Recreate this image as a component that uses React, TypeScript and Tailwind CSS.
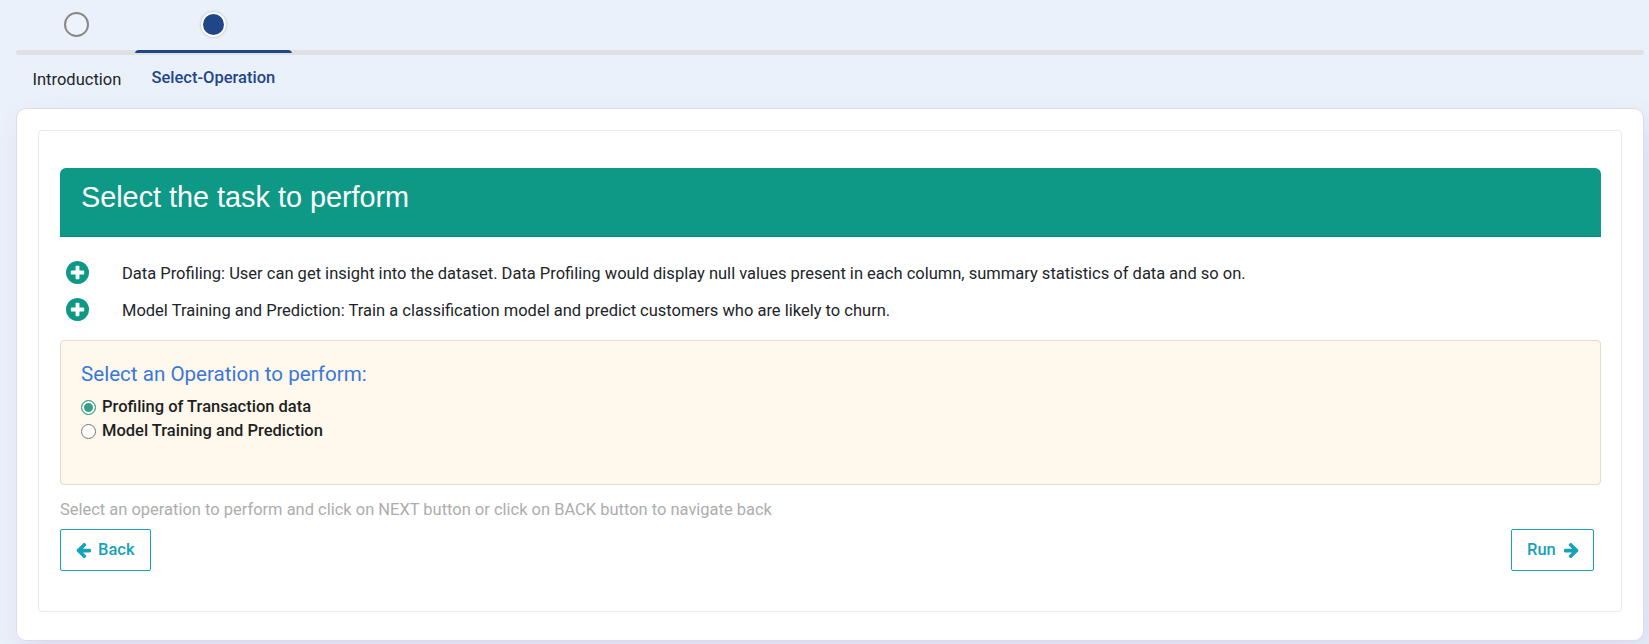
import { useState } from "react";

const tasks = [
  "Data Profiling: User can get insight into the dataset. Data Profiling would display null values present in each column, summary statistics of data and so on.",
  "Model Training and Prediction: Train a classification model and predict customers who are likely to churn.",
];

const operations = ["Profiling of Transaction data", "Model Training and Prediction"];

function PlusCircle({ className }: { className: string }) {
  return (
    <svg viewBox="128 128 1536 1536" fill="currentColor" className={className} aria-hidden="true">
      <path d="M1344 960v-128q0-26-19-45t-45-19h-256v-256q0-26-19-45t-45-19h-128q-26 0-45 19t-19 45v256h-256q-26 0-45 19t-19 45v128q0 26 19 45t45 19h256v256q0 26 19 45t45 19h128q26 0 45-19t19-45v-256h256q26 0 45-19t19-45zm320-64q0 209-103 385.5t-279.5 279.5-385.5 103-385.5-103-279.5-279.5-103-385.5 103-385.5 279.5-279.5 385.5-103 385.5 103 279.5 279.5 103 385.5z" />
    </svg>
  );
}

function Arrow({ className }: { className: string }) {
  return (
    <svg viewBox="128 192 1536 1536" fill="currentColor" className={className} aria-hidden="true">
      <path d="M1664 896v128q0 53-32.5 90.5t-84.5 37.5h-704l293 294q38 36 38 90t-38 90l-75 76q-37 37-90 37-52 0-91-37l-651-652q-37-37-37-90 0-52 37-91l651-650q38-38 91-38 52 0 90 38l75 74q38 38 38 91t-38 91l-293 293h704q52 0 84.5 37.5t32.5 90.5z" />
    </svg>
  );
}

function Stepper() {
  return (
    <nav className="h-[108px] pl-4 pr-[5px]">
      <div className="flex h-[50px] pt-3">
        <div className="flex w-[119px] justify-center">
          <span className="mr-[-2px] size-[25px] rounded-full border-2 border-[#888] bg-[#edf3fb]" />
        </div>
        <div className="flex w-[157px] justify-center">
          <span className="size-[25px] rounded-full border-2 border-white bg-[#1f4788] shadow-[0_0_2px_1px_rgba(0,0,0,0.12)]" />
        </div>
      </div>
      <div className="h-[5px] rounded-full bg-[#dee0e4] pl-[119px]">
        <div className="h-[4px] w-[157px] overflow-hidden rounded-t-[4px]">
          <div className="h-[3px] bg-[#1f4788]" />
        </div>
      </div>
      <div className="flex text-[16.5px] leading-6">
        <span className="w-[119px] pl-[16.5px] pt-[13px] text-[#212529]">Introduction</span>
        <span className="pl-[16.5px] pt-[11px] font-medium text-[#1f4788]">Select-Operation</span>
      </div>
    </nav>
  );
}

export default function App() {
  const [selected, setSelected] = useState(0);
  return (
    <div className="h-[644px] overflow-hidden bg-[#eaf1fa] font-['Roboto',sans-serif] text-[#212529]">
      <Stepper />
      <main className="ml-4 mr-[5px] h-[533px] rounded-[10px] border border-[#e1d8f0] bg-white px-[21px] pt-[21px] shadow-[8px_14px_30px_rgba(90,90,160,0.13)]">
        <section className="h-[482px] rounded-[4px] border border-[#e9eaec] pl-[21px] pr-5 pt-[37px]">
          <header className="h-[69px] rounded-t-[6px] border-b border-[#0c8a79] bg-[#0d9985] px-[21px] pt-3">
            <h1 className="font-['Liberation_Sans',sans-serif] text-[28.8px] leading-[34px] text-white">
              Select the task to perform
            </h1>
          </header>
          <ul className="pt-[17px]">
            {tasks.map((task) => (
              <li key={task} className="flex h-[37px] items-center pl-[6px]">
                <PlusCircle className="size-[23px] text-[#0d9985]" />
                <span className="ml-[33px] pt-[3px] text-[16.5px] leading-6">{task}</span>
              </li>
            ))}
          </ul>
          <div className="mt-[12px] h-[145px] rounded-[4px] border border-[#e4dccb] bg-[#fff8ed] px-5 pt-[21px]">
            <h2 className="text-[20.6px] leading-6 text-[#3a78d8]">Select an Operation to perform:</h2>
            <div className="mt-[9px]">
              {operations.map((operation, index) => (
                <label key={operation} className="flex h-6 items-center text-[16.5px] font-medium leading-6 text-[#1d1f21]">
                  <input
                    type="radio"
                    name="operation"
                    checked={selected === index}
                    onChange={() => setSelected(index)}
                    className="mr-[6px] mt-[1px] size-[15px] appearance-none rounded-full border border-[#767676] bg-white checked:border-[#3b9f85] checked:bg-[#3b9f85] checked:shadow-[inset_0_0_0_2px_white]"
                  />
                  {operation}
                </label>
              ))}
            </div>
          </div>
          <p className="mt-[13px] text-[16.48px] leading-6 text-[#adadad]">
            Select an operation to perform and click on NEXT button or click on BACK button to navigate back
          </p>
          <div className="mt-[7px] flex justify-between pr-[7px] text-[16.5px] font-medium text-[#17a2b8]">
            <button className="flex h-[42px] w-[91px] items-center rounded-[2px] border border-[#17a2b8] pl-[15px]">
              <Arrow className="mr-[7px] size-[15px]" />
              Back
            </button>
            <button className="flex h-[42px] w-[83px] items-center rounded-[2px] border border-[#17a2b8] pl-[15px]">
              Run
              <Arrow className="ml-[8px] size-[15px] rotate-180" />
            </button>
          </div>
        </section>
      </main>
    </div>
  );
}
